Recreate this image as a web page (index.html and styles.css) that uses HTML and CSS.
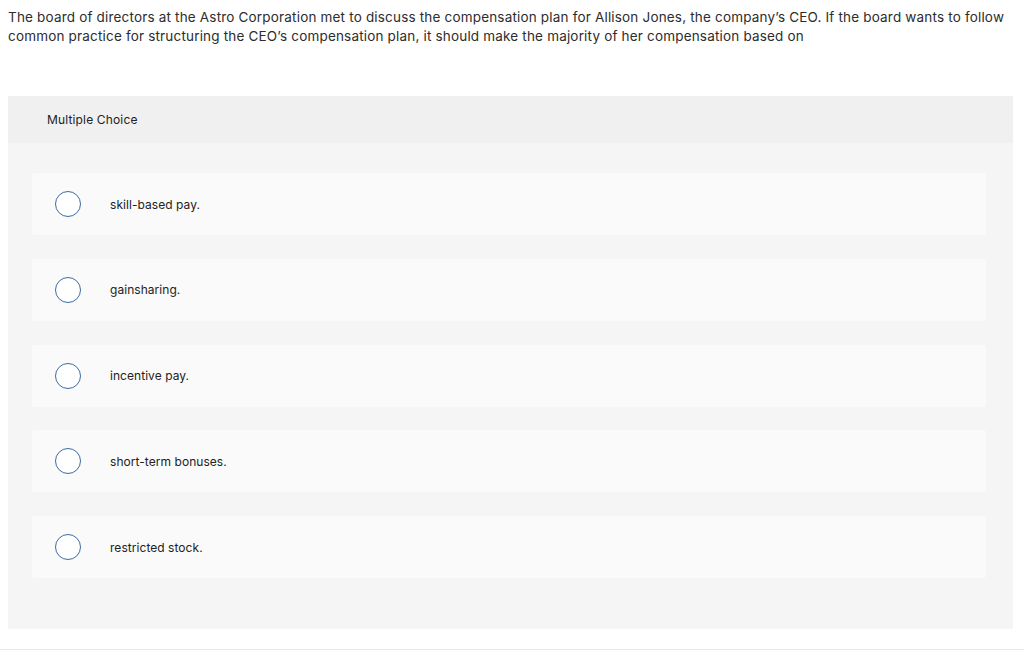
FILE: index.html
```html
<!DOCTYPE html>
<html>
<head>
<meta charset="utf-8">
<link rel="stylesheet" href="styles.css">
</head>
<body>
<div class="page">
  <p class="question">The board of directors at the Astro Corporation met to discuss the compensation plan for Allison Jones, the company’s CEO. If the board wants to follow common practice for structuring the CEO’s compensation plan, it should make the majority of her compensation based on</p>
  <div class="panel">
    <div class="panel-head">Multiple Choice</div>
    <div class="panel-body">
      <div class="option"><span class="radio"></span><span class="label">skill-based pay.</span></div>
      <div class="option"><span class="radio"></span><span class="label">gainsharing.</span></div>
      <div class="option"><span class="radio"></span><span class="label">incentive pay.</span></div>
      <div class="option"><span class="radio"></span><span class="label">short-term bonuses.</span></div>
      <div class="option"><span class="radio"></span><span class="label">restricted stock.</span></div>
    </div>
  </div>
</div>
</body>
</html>
```

FILE: styles.css
```css
html, body {
  margin: 0;
  padding: 0;
  background: #fff;
}
body {
  font-family: "Inter", "Open Sans", sans-serif;
  color: #333;
}
.page {
  width: 1024px;
  height: 650px;
  border-bottom: 1px solid #e8e8e8;
  padding: 0 11px 0 8px;
  box-sizing: border-box;
}
.question {
  margin: 0;
  padding-top: 8px;
  font-size: 13.5px;
  letter-spacing: 0.18px;
  line-height: 19px;
  color: #2d2d2d;
  height: 88px;
}
.panel {
  background: #f5f5f5;
  border-radius: 2px;
  height: 533px;
}
.panel-head {
  background: #f0f0f0;
  height: 47px;
  display: flex;
  align-items: center;
  padding-left: 39px;
  font-size: 12px;
  letter-spacing: 0.15px;
  color: #222;
}
.panel-body {
  padding: 30px 27px 0 24px;
  display: flex;
  flex-direction: column;
  gap: 23.75px;
}
.option {
  background: #fafafa;
  height: 62px;
  border-radius: 2px;
  display: flex;
  align-items: center;
  padding-left: 23px;
}
.radio {
  width: 26px;
  height: 26px;
  border: 1.3px solid #3c6aa3;
  border-radius: 50%;
  background: #fff;
  box-sizing: border-box;
  flex: none;
}
.label {
  margin-left: 29px;
  font-size: 12px;
  letter-spacing: 0.05px;
  color: #222;
}
```
